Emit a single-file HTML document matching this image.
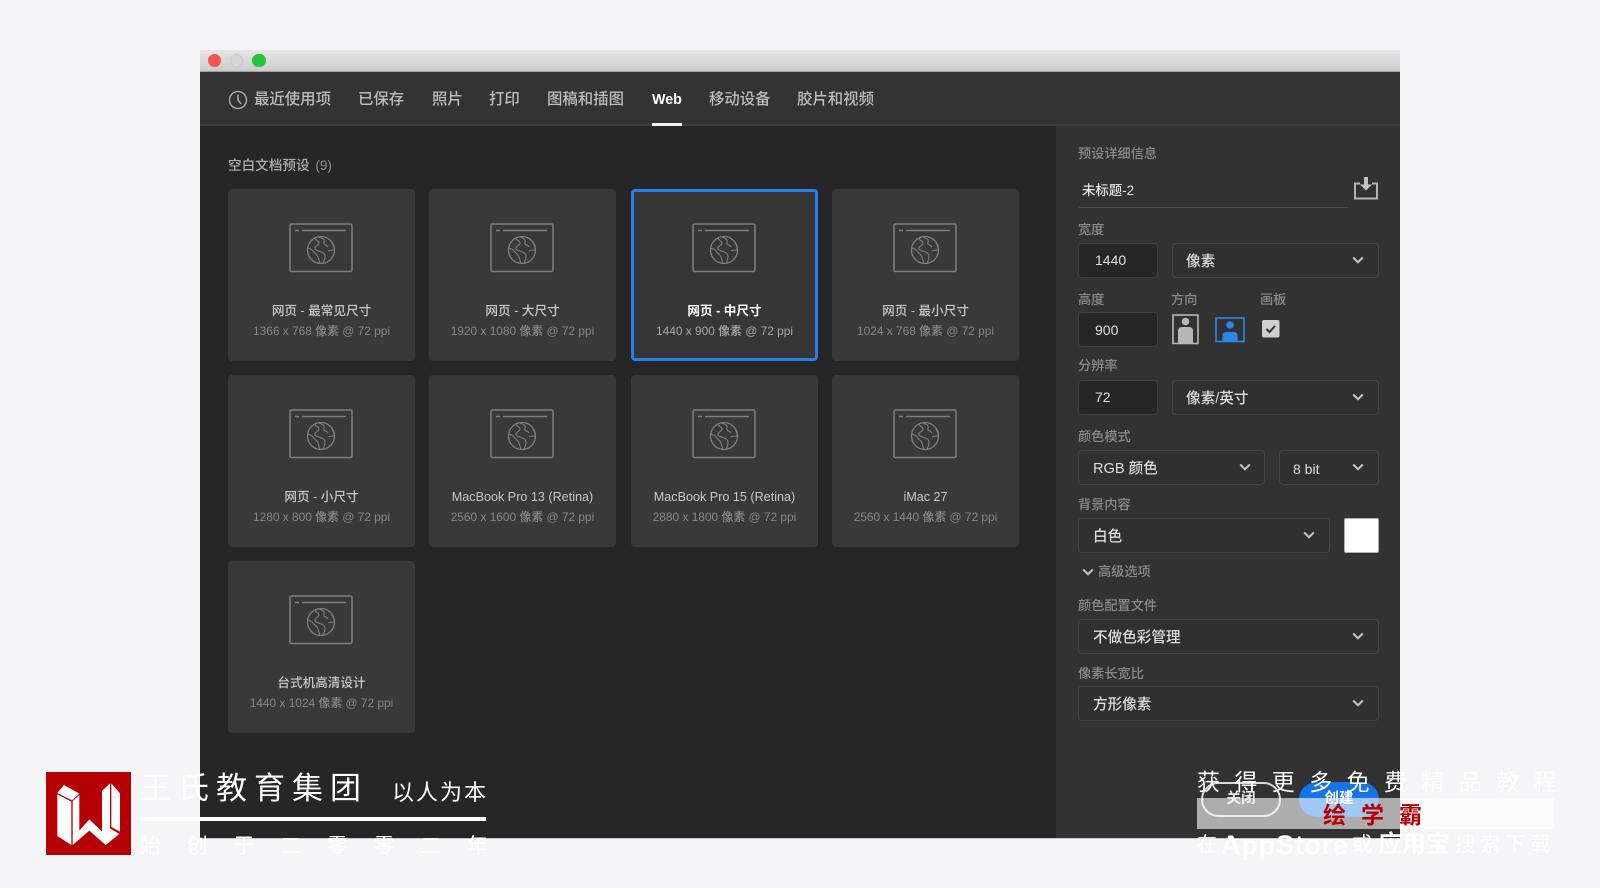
<!DOCTYPE html>
<html lang="zh"><head><meta charset="utf-8"><title>新建文档</title>
<style>
*{box-sizing:border-box;margin:0;padding:0}
html,body{width:1600px;height:888px;overflow:hidden;background:#f5f5f8}
body{position:relative;font-family:"Liberation Sans","Noto Sans CJK SC",sans-serif;filter:blur(.3px)}
.a,.t,.c,.card,.in,.sel{position:absolute}
.t{white-space:nowrap;line-height:20px;height:20px}
.n{font-size:15.4px;color:#bdbdbd;top:90px;font-weight:500}
.l{font-size:13.2px;color:#8b8b8b;font-weight:500}
.card{width:187px;height:172px;background:#393939;border-radius:4px}
.card.on{border:3px solid #2680eb;background:#363636}
.card svg{position:absolute;left:61px;top:34px}
.card.on svg{left:58px;top:31px}
.c{left:0;width:100%;text-align:center;white-space:nowrap;line-height:20px}
.on .c{left:-3px;width:187px}
.c.h{top:112px;font-size:12.6px;color:#c8c8c8;font-weight:500}
.on .c.h{top:109px;color:#fff;font-weight:bold}
.c.s{top:132px;font-size:11.900px;color:#878787;font-weight:500}
.on .c.s{top:129px;color:#a8a8a8}
.in{left:1078px;width:80px;height:35px;background:#262626;border:1px solid #3f3f3f;border-radius:4px}
.sel{height:35px;background:#303030;border:1px solid #444;border-radius:4px}
.v{font-size:14px;color:#e0e0e0}
.o{font-size:14.6px;color:#dedede;font-weight:500}
.chev{position:absolute}
</style></head><body>
<svg width="0" height="0" style="position:absolute"><defs>
<symbol id="ic" viewBox="0 0 66 52">
<rect x="1" y="1" width="62" height="47.500" rx="1.500" fill="none" stroke="#7f7f7f" stroke-width="1.500"/>
<path d="M6 7.500h4M13 7.500h44" stroke="#7f7f7f" stroke-width="1.500" fill="none"/>
<circle cx="32" cy="27" r="13.500" fill="none" stroke="#7f7f7f" stroke-width="1.300"/>
<path d="M26 15.500c1 2 3 2 4 4s-3 3-4 5 2 3 5 4 5 2 5 5-1 4-2 7M30 14c2 1 4 1 5 3s-1 3 0 4 3 1 4 3M39 28c2-1 4-1 6-1M43 19c0 3 3 4 2 8M19 25c2 1 4 1 5 3s4 3 5 6 1 4 2 6" fill="none" stroke="#7f7f7f" stroke-width="1.100"/>
</symbol>
<symbol id="ch" viewBox="0 0 12 8"><path d="M1.200 1.500 6 6.200 10.800 1.500" fill="none" stroke="#c4c4c4" stroke-width="2"/></symbol>
</defs></svg>

<!-- window -->
<div class="a" style="left:200px;top:50px;width:1200px;height:789px;background:#262626;border-bottom:1px solid #c8c8c8"></div>
<div class="a" style="left:200px;top:50px;width:1200px;height:22px;background:linear-gradient(#e6e6e6,#cbcbcb);border-bottom:1px solid #9e9e9e"></div>
<div class="a" style="left:207.500px;top:53.500px;width:13px;height:13px;border-radius:50%;background:#f9524c"></div>
<div class="a" style="left:230px;top:53.500px;width:13px;height:13px;border-radius:50%;background:#d6d6d6;border:1px solid #c8c8c8"></div>
<div class="a" style="left:252px;top:53.500px;width:13.500px;height:13.500px;border-radius:50%;background:#25c43a"></div>
<div class="a" style="left:200px;top:72px;width:1200px;height:54px;background:#333;border-bottom:2px solid #3d3d3d"></div>
<svg class="a" style="left:228px;top:90px" width="20" height="20" viewBox="0 0 20 20"><circle cx="10" cy="10" r="8.500" fill="none" stroke="#b4b4b4" stroke-width="1.300"/><path d="M10 4.500V10l3 4" fill="none" stroke="#b4b4b4" stroke-width="1.400"/></svg>
<div class="t n" style="left:254px">最近使用项</div>
<div class="t n" style="left:358px">已保存</div>
<div class="t n" style="left:432px">照片</div>
<div class="t n" style="left:489px">打印</div>
<div class="t n" style="left:547px">图稿和插图</div>
<div class="t n" style="left:652px;color:#fff;font-weight:bold;font-size:14.300px">Web</div>
<div class="a" style="left:652px;top:123px;width:30px;height:3px;background:#f2f2f2"></div>
<div class="t n" style="left:709px">移动设备</div>
<div class="t n" style="left:797px">胶片和视频</div>

<div class="a" style="left:1056px;top:126px;width:344px;height:713px;background:#323232;border-bottom:1px solid #c8c8c8"></div>

<div class="t" style="left:228px;top:156px;font-size:13.600px;color:#b0b0b0;font-weight:500">空白文档预设 <span style="color:#8f8f8f;margin-left:2px">(9)</span></div>

<div class="card" style="left:228px;top:189px"><svg width="66" height="52"><use href="#ic"/></svg><div class="c h">网页 - 最常见尺寸</div><div class="c s">1366 x 768 像素 @ 72 ppi</div></div>
<div class="card" style="left:429px;top:189px"><svg width="66" height="52"><use href="#ic"/></svg><div class="c h">网页 - 大尺寸</div><div class="c s">1920 x 1080 像素 @ 72 ppi</div></div>
<div class="card on" style="left:631px;top:189px"><svg width="66" height="52"><use href="#ic"/></svg><div class="c h">网页 - 中尺寸</div><div class="c s">1440 x 900 像素 @ 72 ppi</div></div>
<div class="card" style="left:832px;top:189px"><svg width="66" height="52"><use href="#ic"/></svg><div class="c h">网页 - 最小尺寸</div><div class="c s">1024 x 768 像素 @ 72 ppi</div></div>

<div class="card" style="left:228px;top:375px"><svg width="66" height="52"><use href="#ic"/></svg><div class="c h">网页 - 小尺寸</div><div class="c s">1280 x 800 像素 @ 72 ppi</div></div>
<div class="card" style="left:429px;top:375px"><svg width="66" height="52"><use href="#ic"/></svg><div class="c h">MacBook Pro 13 (Retina)</div><div class="c s">2560 x 1600 像素 @ 72 ppi</div></div>
<div class="card" style="left:631px;top:375px"><svg width="66" height="52"><use href="#ic"/></svg><div class="c h">MacBook Pro 15 (Retina)</div><div class="c s">2880 x 1800 像素 @ 72 ppi</div></div>
<div class="card" style="left:832px;top:375px"><svg width="66" height="52"><use href="#ic"/></svg><div class="c h">iMac 27</div><div class="c s">2560 x 1440 像素 @ 72 ppi</div></div>

<div class="card" style="left:228px;top:561px"><svg width="66" height="52"><use href="#ic"/></svg><div class="c h">台式机高清设计</div><div class="c s">1440 x 1024 像素 @ 72 ppi</div></div>

<!-- right panel -->
<div class="t l" style="left:1078px;top:144px">预设详细信息</div>
<div class="t" style="left:1082px;top:181px;font-size:13.400px;color:#e2e2e2;font-weight:500">未标题-2</div>
<div class="a" style="left:1079px;top:207px;width:269px;height:1px;background:#4c4c4c"></div>
<svg class="a" style="left:1353px;top:176px" width="26" height="24" viewBox="0 0 26 24"><path d="M7 7.500H2V22.500H24V7.500H19" fill="none" stroke="#b4b4b4" stroke-width="2"/><path d="M11 1H15V8.500H19L13 14.500 7 8.500H11Z" fill="#c4c4c4"/></svg>

<div class="t l" style="left:1078px;top:220px">宽度</div>
<div class="in" style="top:243px"></div><div class="t v" style="left:1095px;top:250px">1440</div>
<div class="sel" style="left:1172px;top:243px;width:207px"></div><div class="t o" style="left:1186px;top:252px">像素</div>
<svg class="chev" style="left:1352px;top:256px" width="12" height="8"><use href="#ch"/></svg>

<div class="t l" style="left:1078px;top:290px">高度</div>
<div class="t l" style="left:1171px;top:290px">方向</div>
<div class="t l" style="left:1260px;top:290px">画板</div>
<div class="in" style="top:312px"></div><div class="t v" style="left:1095px;top:320px">900</div>
<svg class="a" style="left:1172px;top:314px" width="27" height="31" viewBox="0 0 27 31"><rect x="1" y="1" width="25" height="28.500" fill="none" stroke="#b8b8b8" stroke-width="1.600"/><circle cx="13.500" cy="7.500" r="3.800" fill="#b8b8b8"/><path d="M6 29V17q0-4 4-4h7q4 0 4 4V29Z" fill="#b8b8b8"/></svg>
<svg class="a" style="left:1215px;top:317px" width="30" height="26" viewBox="0 0 30 26"><rect x="1" y="1" width="28" height="23.500" fill="none" stroke="#2d87ea" stroke-width="1.600"/><circle cx="15" cy="8" r="3.800" fill="#2d87ea"/><path d="M7.500 24V19q0-4 4-4h7q4 0 4 4V24Z" fill="#2d87ea"/></svg>
<svg class="a" style="left:1262px;top:320px" width="18" height="18" viewBox="0 0 18 18"><rect width="17.500" height="17.500" rx="2" fill="#cfcfcf"/><path d="M4.500 9 7.500 12 13 6" fill="none" stroke="#303030" stroke-width="2"/></svg>

<div class="t l" style="left:1078px;top:356px">分辨率</div>
<div class="in" style="top:380px"></div><div class="t v" style="left:1095px;top:387px">72</div>
<div class="sel" style="left:1172px;top:380px;width:207px"></div><div class="t o" style="left:1186px;top:389px">像素/英寸</div>
<svg class="chev" style="left:1352px;top:393px" width="12" height="8"><use href="#ch"/></svg>

<div class="t l" style="left:1078px;top:427px">颜色模式</div>
<div class="sel" style="left:1078px;top:450px;width:187px"></div><div class="t o" style="left:1093px;top:459px">RGB 颜色</div>
<svg class="chev" style="left:1239px;top:463px" width="12" height="8"><use href="#ch"/></svg>
<div class="sel" style="left:1279px;top:450px;width:100px"></div><div class="t o" style="left:1293px;top:459px;font-size:14px">8 bit</div>
<svg class="chev" style="left:1352px;top:463px" width="12" height="8"><use href="#ch"/></svg>

<div class="t l" style="left:1078px;top:495px">背景内容</div>
<div class="sel" style="left:1078px;top:518px;width:252px"></div><div class="t o" style="left:1093px;top:527px">白色</div>
<svg class="chev" style="left:1303px;top:531px" width="12" height="8"><use href="#ch"/></svg>
<div class="a" style="left:1344px;top:518px;width:35px;height:35px;background:#fff;border:1px solid #b0b0b0;border-radius:2px"></div>

<svg class="chev" style="left:1082px;top:568px" width="12" height="8"><use href="#ch"/></svg>
<div class="t l" style="left:1098px;top:562px">高级选项</div>

<div class="t l" style="left:1078px;top:596px">颜色配置文件</div>
<div class="sel" style="left:1078px;top:619px;width:301px"></div><div class="t o" style="left:1093px;top:628px">不做色彩管理</div>
<svg class="chev" style="left:1352px;top:632px" width="12" height="8"><use href="#ch"/></svg>

<div class="t l" style="left:1078px;top:664px">像素长宽比</div>
<div class="sel" style="left:1078px;top:686px;width:301px"></div><div class="t o" style="left:1093px;top:695px">方形像素</div>
<svg class="chev" style="left:1352px;top:699px" width="12" height="8"><use href="#ch"/></svg>

<!-- buttons -->
<div class="a" style="left:1201px;top:782px;width:80px;height:35px;border:2px solid #d8d8d8;border-radius:18px"></div>
<div class="t" style="left:1201px;width:80px;text-align:center;top:789px;font-size:14.500px;font-weight:bold;color:#e6e6e6">关闭</div>
<div class="a" style="left:1299px;top:782px;width:80px;height:35px;background:#1473e6;border-radius:18px"></div>
<div class="t" style="left:1299px;width:80px;text-align:center;top:789px;font-size:14.500px;font-weight:bold;color:#fff">创建</div>

<!-- watermark left -->
<div class="a" style="left:46px;top:772px;width:85px;height:83px;background:#b50005"></div>
<svg class="a" style="left:40px;top:765px" width="100" height="100" viewBox="0 0 300 300" fill="#fff"><path d="M52 84 72 60 118 86 96 106Z"/><path d="M52 88 94 110V240L52 213Z"/><path d="M98 108 118 90V197L148 163 186 200V78L210 55V190L238 207 197 240 148 197 98 240Z"/><path d="M214 55 240 85V200L214 186Z"/></svg>
<div class="t" style="left:140px;top:769px;height:40px;line-height:40px;font-size:31px;letter-spacing:7px;color:#fff">王氏教育集团</div>
<div class="t" style="left:392px;top:778px;height:30px;line-height:30px;font-size:22px;letter-spacing:2px;color:#fff">以人为本</div>
<div class="a" style="left:140px;top:817px;width:346px;height:4px;background:#fff"></div>
<div class="t" style="left:140px;top:832px;height:30px;line-height:30px;font-size:21px;letter-spacing:25.700px;color:#fff">始创于二零零二年</div>

<!-- watermark right -->
<div class="t" style="left:1197px;top:767px;height:30px;line-height:30px;font-size:23px;letter-spacing:14.400px;color:#fff">获得更多免费精品教程</div>
<div class="a" style="left:1197px;top:798px;width:357px;height:31px;background:rgba(255,255,255,.6)"></div>
<div class="t" style="left:1323px;top:800px;height:30px;line-height:30px;font-size:23px;letter-spacing:15px;font-weight:bold;color:#b50005">绘学霸</div>
<div class="t" style="left:1197px;top:830px;height:30px;line-height:30px;font-size:20px;color:#fff">在</div>
<div class="t" style="left:1221px;top:830px;height:30px;line-height:30px;font-size:27px;letter-spacing:.8px;font-weight:bold;color:#fff">AppStore</div>
<div class="t" style="left:1352px;top:830px;height:30px;line-height:30px;font-size:20px;color:#fff">或</div>
<div class="t" style="left:1378px;top:830px;height:30px;line-height:30px;font-size:24px;font-weight:bold;color:#fff">应用宝</div>
<div class="t" style="left:1455px;top:830px;height:30px;line-height:30px;font-size:20px;letter-spacing:5px;color:#fff">搜索下载</div>
</body></html>
